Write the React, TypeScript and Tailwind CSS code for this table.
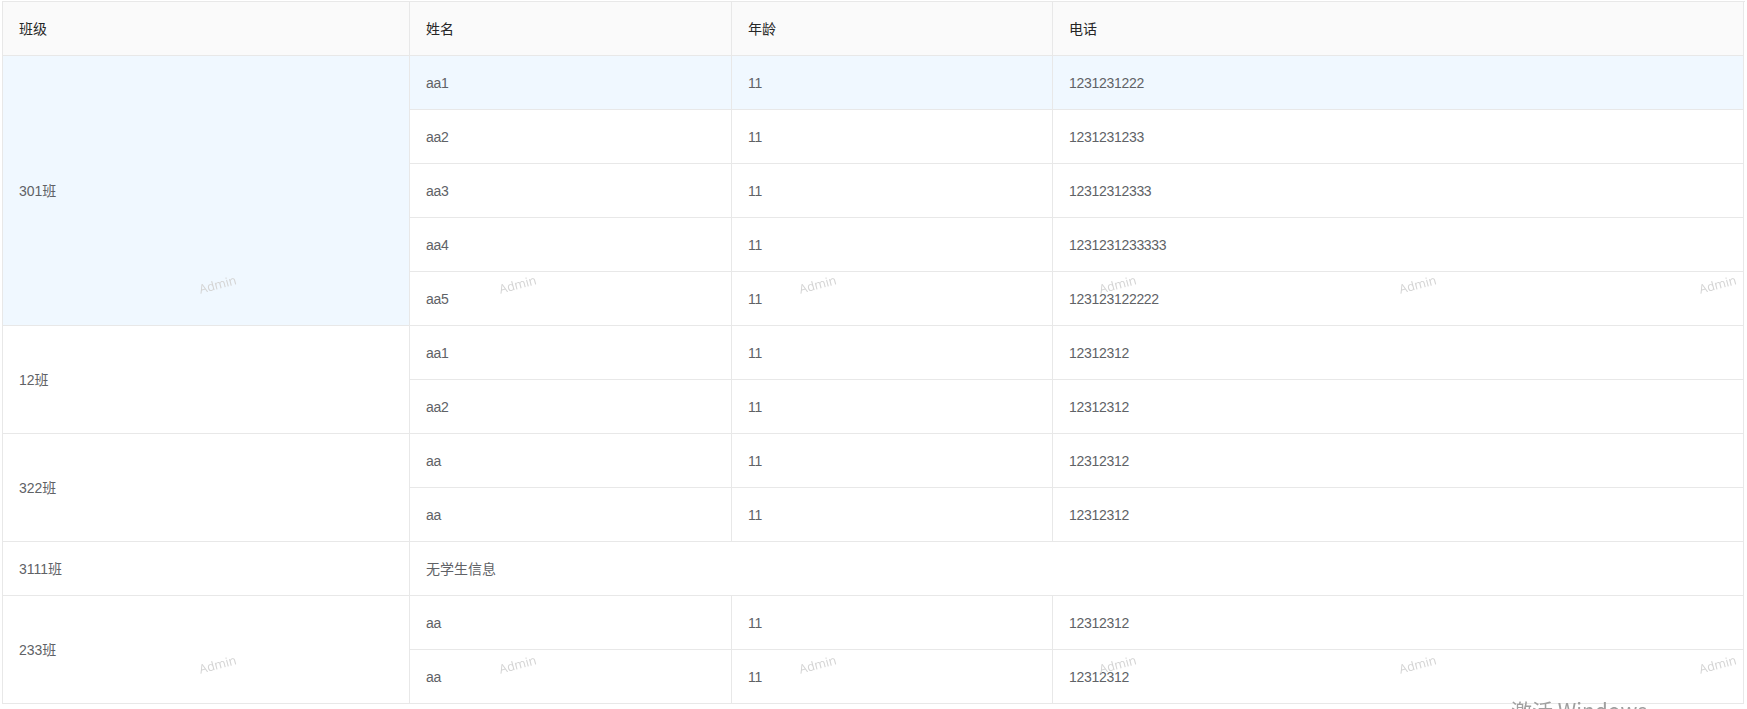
const classes = [
  {
    name: "301班",
    students: [
      { name: "aa1", age: 11, phone: "1231231222" },
      { name: "aa2", age: 11, phone: "1231231233" },
      { name: "aa3", age: 11, phone: "12312312333" },
      { name: "aa4", age: 11, phone: "1231231233333" },
      { name: "aa5", age: 11, phone: "123123122222" },
    ],
  },
  {
    name: "12班",
    students: [
      { name: "aa1", age: 11, phone: "12312312" },
      { name: "aa2", age: 11, phone: "12312312" },
    ],
  },
  {
    name: "322班",
    students: [
      { name: "aa", age: 11, phone: "12312312" },
      { name: "aa", age: 11, phone: "12312312" },
    ],
  },
  { name: "3111班", students: [] },
  {
    name: "233班",
    students: [
      { name: "aa", age: 11, phone: "12312312" },
      { name: "aa", age: 11, phone: "12312312" },
    ],
  },
];

const spans: Record<number, string> = {
  1: "row-span-1",
  2: "row-span-2",
  3: "row-span-3",
  4: "row-span-4",
  5: "row-span-5",
};

const cell = "flex items-center border-r border-b border-[#e8e8e8] px-4 pt-[2px]";

function Watermark() {
  return (
    <div className="pointer-events-none fixed inset-0 overflow-hidden">
      <div className="absolute left-[68px] top-[95px] grid grid-cols-[repeat(6,300px)] auto-rows-[380px]">
        {Array.from({ length: 12 }).map((_, i) => (
          <div key={i} className="flex items-center justify-center">
            <span className="-rotate-[15deg] text-[12.5px] text-[#d4d4d4] font-['Open_Sans',sans-serif]">
              Admin
            </span>
          </div>
        ))}
      </div>
      <span className="absolute left-[1511px] top-[697px] text-[21px] leading-[26px] text-[#a0a0a0] font-['Noto_Sans_CJK_SC',sans-serif]">
        激活 Windows
      </span>
    </div>
  );
}

export default function App() {
  return (
    <div className="min-h-[709px] bg-white pl-[2px] pt-[1px] text-[14px] font-['Liberation_Sans','Noto_Sans_CJK_SC',sans-serif]">
      <div className="grid w-[1743px] grid-cols-[407px_322px_321px_691px] auto-rows-[54px] border-l border-t border-[#e8e8e8] text-[#606266]">
        {["班级", "姓名", "年龄", "电话"].map((h) => (
          <div key={h} className={`${cell} bg-[#fafafa] text-[#262626]`}>
            {h}
          </div>
        ))}

        {classes.map((c, ci) =>
          c.students.length === 0 ? (
            <div key={c.name} className="contents">
              <div className={cell}>{c.name}</div>
              <div className={`${cell} col-span-3`}>无学生信息</div>
            </div>
          ) : (
            <div key={c.name} className="contents">
              <div className={`${cell} ${spans[c.students.length]} ${ci === 0 ? "bg-[#f0f8ff]" : ""}`}>
                {c.name}
              </div>
              {c.students.map((s, si) => {
                const hover = ci === 0 && si === 0 ? "bg-[#f0f8ff]" : "";
                return (
                  <div key={si} className="contents tracking-[-0.3px]">
                    <div className={`${cell} ${hover}`}>{s.name}</div>
                    <div className={`${cell} ${hover}`}>{s.age}</div>
                    <div className={`${cell} ${hover}`}>{s.phone}</div>
                  </div>
                );
              })}
            </div>
          ),
        )}
      </div>
      <Watermark />
    </div>
  );
}
